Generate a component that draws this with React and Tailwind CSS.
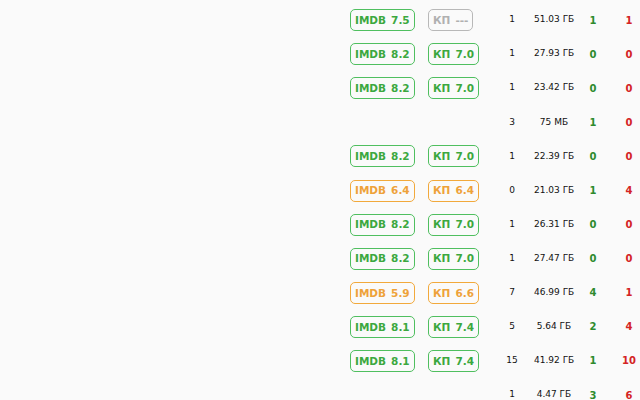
import React from "react";

const rows = [
  { imdb: "7.5", kp: "---", c: "1", size: "51.03 ГБ", g: "1", r: "1", color: "green", kpGray: true },
  { imdb: "8.2", kp: "7.0", c: "1", size: "27.93 ГБ", g: "0", r: "0", color: "green" },
  { imdb: "8.2", kp: "7.0", c: "1", size: "23.42 ГБ", g: "0", r: "0", color: "green" },
  { imdb: null, c: "3", size: "75 МБ", g: "1", r: "0" },
  { imdb: "8.2", kp: "7.0", c: "1", size: "22.39 ГБ", g: "0", r: "0", color: "green" },
  { imdb: "6.4", kp: "6.4", c: "0", size: "21.03 ГБ", g: "1", r: "4", color: "orange" },
  { imdb: "8.2", kp: "7.0", c: "1", size: "26.31 ГБ", g: "0", r: "0", color: "green" },
  { imdb: "8.2", kp: "7.0", c: "1", size: "27.47 ГБ", g: "0", r: "0", color: "green" },
  { imdb: "5.9", kp: "6.6", c: "7", size: "46.99 ГБ", g: "4", r: "1", color: "orange" },
  { imdb: "8.1", kp: "7.4", c: "5", size: "5.64 ГБ", g: "2", r: "4", color: "green" },
  { imdb: "8.1", kp: "7.4", c: "15", size: "41.92 ГБ", g: "1", r: "10", color: "green" },
  { imdb: null, c: "1", size: "4.47 ГБ", g: "3", r: "6" },
];

const styles = {
  green: "border-[#4fbf5f] text-[#3ca83f]",
  orange: "border-[#f2a93b] text-[#eea23a]",
  gray: "border-[#b8b8b8] text-[#b0b0b0]",
};

function Badge({ label, value, tone }) {
  return (
    <span
      className={`inline-flex items-center h-[22px] px-[4px] border rounded-[5px] font-bold text-[10.5px] leading-none gap-[5px] ${styles[tone]}`}
    >
      <span>{label}</span>
      <span>{value}</span>
    </span>
  );
}

export default function App() {
  return (
    <div
      className="w-[640px] h-[400px] overflow-hidden bg-[#fafafa] pt-[3px]"
      style={{ fontFamily: '"DejaVu Sans", Verdana, sans-serif' }}
    >
      {rows.map((row, i) => (
        <div key={i} className="flex items-center h-[34.1px]">
          <div className="flex-1" />
          <div className="w-[78px] flex">
            {row.imdb && <Badge label="IMDB" value={row.imdb} tone={row.color} />}
          </div>
          <div className="w-[62px] flex">
            {row.imdb && (
              <Badge label="КП" value={row.kp} tone={row.kpGray ? "gray" : row.color} />
            )}
          </div>
          <div className="w-[44px] text-center text-[9px] text-[#111]">{row.c}</div>
          <div className="w-[40px] text-center text-[9px] text-[#111] whitespace-nowrap">{row.size}</div>
          <div className="w-[38px] text-center text-[10px] font-bold text-[#2e8a2e]">{row.g}</div>
          <div className="w-[28px] pl-[6px] text-center text-[10px] font-bold text-[#d42424]">{row.r}</div>
        </div>
      ))}
    </div>
  );
}
